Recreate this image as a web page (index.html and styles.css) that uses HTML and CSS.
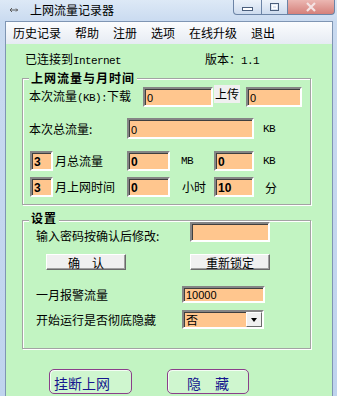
FILE: index.html
```html
<!DOCTYPE html>
<html lang="zh-CN">
<head>
    <meta charset="UTF-8">
    <title>上网流量记录器</title>
    <link rel="stylesheet" href="styles.css">
</head>
<body>
    <div class="titlebar">
        <svg class="app-icon" width="10" height="6" viewBox="0 0 10 6">
            <path d="M3 1 L1 3 L3 5 M1 3 H9 M7 1.5 L8.5 3 L7 4.5" fill="none" stroke="#5a5a5a" stroke-width="1"/>
        </svg>
        <span class="title">上网流量记录器</span>
        <div class="caption">
            <span class="cap cap-min">
                <svg width="11" height="5" viewBox="0 0 11 5"><rect x="0.5" y="0.5" width="10" height="3" fill="#fff" stroke="#4b5f7c"/></svg>
            </span>
            <span class="cap cap-max">
                <svg width="9" height="8" viewBox="0 0 9 8"><rect x="0.5" y="0.5" width="8" height="7" fill="none" stroke="#4b5f7c"/><rect x="2.5" y="2.5" width="4" height="3" fill="none" stroke="#fff"/></svg>
            </span>
            <span class="cap cap-close">
                <svg width="12" height="10" viewBox="0 0 12 10"><path d="M2 1 L10 9 M10 1 L2 9" stroke="#f4e4e4" stroke-width="2.2"/></svg>
            </span>
        </div>
    </div>

    <div class="client">
        <ul class="menubar">
            <li>历史记录</li>
            <li>帮助</li>
            <li>注册</li>
            <li>选项</li>
            <li>在线升级</li>
            <li>退出</li>
        </ul>

        <div class="form">
            <div class="status">
                <span class="status-conn">已连接到<span class="lat">Internet</span></span>
                <span>版本：<span class="lat">1.1</span></span>
            </div>

            <!-- 流量与时间 -->
            <div class="group group-traffic">
                <span class="group-title">上网流量与月时间</span>
                <div class="row">
                    <span class="lbl lbl-down">本次流量<span class="lat">(KB):</span>下载</span>
                    <input class="field w70" value="0" readonly>
                    <span class="lbl-up">上传</span>
                    <input class="field w56" value="0" readonly>
                </div>
                <div class="row row-total">
                    <span class="lbl lbl-total">本次总流量:</span>
                    <input class="field w127 h21" value="0" readonly>
                    <span class="unit lat">KB</span>
                </div>
                <div class="row row-month">
                    <input class="field bold w23" value="3" readonly>
                    <span class="lbl lbl-month">月总流量</span>
                    <input class="field bold w43" value="0" readonly>
                    <span class="lbl lbl-mb lat">MB</span>
                    <input class="field bold w40" value="0" readonly>
                    <span class="unit lat">KB</span>
                </div>
                <div class="row row-time">
                    <input class="field bold w23" value="3" readonly>
                    <span class="lbl lbl-month">月上网时间</span>
                    <input class="field bold w43" value="0" readonly>
                    <span class="lbl lbl-hour">小时</span>
                    <input class="field bold w40" value="10" readonly>
                    <span class="unit unit-min">分</span>
                </div>
            </div>

            <!-- 设置 -->
            <div class="group group-settings">
                <span class="group-title">设置</span>
                <div class="row">
                    <span class="lbl lbl-pwd">输入密码按确认后修改:</span>
                    <input class="field w80" value="" readonly>
                </div>
                <div class="row row-btns">
                    <button class="btn btn-ok">确　认</button>
                    <button class="btn btn-relock">重新锁定</button>
                </div>
                <div class="row row-alarm">
                    <span class="lbl lbl-set">一月报警流量</span>
                    <input class="field w83 h17" value="10000" readonly>
                </div>
                <div class="row row-hide">
                    <span class="lbl lbl-set">开始运行是否彻底隐藏</span>
                    <div class="combo">
                        <span class="combo-value">否</span>
                        <span class="combo-arrow"></span>
                    </div>
                </div>
            </div>

            <div class="actions">
                <button class="action action-hangup">挂断上网</button>
                <button class="action action-hide">隐　藏</button>
            </div>
        </div>
    </div>
</body>
</html>
```

FILE: styles.css
```css
body {
    margin: 0;
    width: 337px;
    height: 396px;
    overflow: hidden;
    background: linear-gradient(#dde9f6, #c9daf0 22px, #bfd4ee);
    font-family: "Noto Sans CJK SC", sans-serif;
    font-size: 12px;
    color: #000;
}

/* 标题栏 */
.titlebar {
    height: 21px;
    display: flex;
    align-items: flex-start;
}

.app-icon {
    margin: 7px 0 0 9px;
}

.title {
    margin: 2px 0 0 11px;
    line-height: 16px;
}

.caption {
    display: flex;
    margin-left: auto;
    margin-right: 2px;
}

.cap {
    height: 15px;
    box-sizing: border-box;
    border: 1px solid #6c84a6;
    border-top: 0;
    display: flex;
    align-items: center;
    justify-content: center;
    background: linear-gradient(#edf3fa, #cddbee);
}

.cap-min {
    width: 29px;
    border-bottom-left-radius: 4px;
    padding-top: 4px;
}

.cap-max {
    width: 26px;
    border-left: 0;
}

.cap-close {
    width: 47px;
    border-left: 0;
    border-bottom-right-radius: 4px;
    background: linear-gradient(#ebb7b2, #d5807a);
}

/* 窗体 */
.client {
    margin: 0 4px 0 5px;
    height: 375px;
    border: 1px solid #7f95b3;
    border-bottom: 0;
    display: flex;
    flex-direction: column;
}

.menubar {
    height: 22px;
    margin: 0;
    padding: 0;
    list-style: none;
    display: flex;
    background: linear-gradient(#fbfcfe, #e6ebf3);
}

.menubar li {
    padding: 0 7px;
    line-height: 22px;
}

.form {
    flex: 1;
    background: #c2f4c2;
}

.lat {
    font-family: "Liberation Mono", monospace;
    font-size: 11px;
    letter-spacing: -0.6px;
}

.status {
    display: flex;
    margin-top: 7px;
    padding-left: 19px;
    line-height: 16px;
}

.status-conn {
    width: 180px;
}

/* 分组框 */
.group {
    position: relative;
    margin-left: 16px;
    width: 289px;
    box-sizing: border-box;
    border: 1px solid #a3a3a3;
    box-shadow: inset 1px 1px 0 #fff, 1px 1px 0 #fff;
}

.group-title {
    position: absolute;
    top: -8px;
    left: 6px;
    padding: 0 2px;
    background: #c2f4c2;
    font-weight: bold;
    letter-spacing: 1px;
    line-height: 14px;
}

.group-settings .group-title {
    top: -10px;
}

.group-traffic {
    margin-top: 9px;
    padding: 8px 0 7px;
}

.group-settings {
    margin-top: 15px;
    padding: 1px 0 19px;
}

.row {
    display: flex;
    align-items: center;
}

.lbl {
    flex: none;
    white-space: nowrap;
    line-height: 14px;
}

.lbl-down {
    width: 114px;
    margin-left: 6px;
}

.lbl-up {
    align-self: flex-start;
    width: 26px;
    height: 18px;
    margin: -2px 0 0 1px;
    background: #f0f0f0;
    line-height: 18px;
    padding-left: 1px;
    box-sizing: border-box;
}

.row-total {
    margin-top: 11px;
}

.lbl-total {
    width: 98px;
    margin-left: 6px;
}

.unit {
    margin-left: 9px;
}

.unit-min {
    margin-left: 11px;
}

.row-month {
    margin-top: 12px;
}

.row-time {
    margin-top: 6px;
}

.row-month .field:first-child,
.row-time .field:first-child {
    margin-left: 7px;
}

.lbl-month {
    width: 72px;
    margin-left: 2px;
}

.lbl-mb {
    width: 33px;
    margin-left: 11px;
}

.lbl-hour {
    width: 32px;
    margin-left: 12px;
}

.lbl-pwd {
    width: 154px;
    margin: 8px 0 0 13px;
    line-height: 12px;
}

.lbl-set {
    width: 146px;
    margin-left: 13px;
}

.row-btns {
    margin-top: 12px;
}

.row-alarm {
    margin-top: 16px;
}

.row-hide {
    margin-top: 7px;
}

/* 文本框 */
.field {
    flex: none;
    box-sizing: border-box;
    height: 20px;
    margin: 0;
    padding: 2px 0 0 2px;
    border: 2px solid;
    border-color: #858585 #fff #fff #858585;
    box-shadow: inset 1px 1px 0 #3f3f3f;
    background: #ffc68e;
    font-family: "Liberation Sans", sans-serif;
    font-size: 11px;
    color: #000;
    outline: none;
}

.field.bold {
    font-weight: bold;
    font-size: 12px;
}

.w23 { width: 23px; }
.w40 { width: 40px; }
.w43 { width: 43px; }
.w56 { width: 56px; margin-left: 6px; }
.w70 { width: 70px; }
.w80 { width: 80px; }
.w83 { width: 83px; }
.w127 { width: 127px; }
.h21 { height: 21px; }
.h17 { height: 17px; padding-top: 1px; }

/* 按钮 */
.btn {
    width: 80px;
    height: 16px;
    padding: 0;
    box-sizing: border-box;
    border: 1px solid;
    border-color: #fff #6a6a6a #6a6a6a #fff;
    box-shadow: inset -1px -1px 0 #a0a0a0;
    background: #f0f0f0;
    font-family: "Noto Sans CJK SC", sans-serif;
    font-size: 12px;
    line-height: 13px;
    color: #000;
}

.btn-ok {
    margin-left: 23px;
}

.btn-relock {
    margin-left: 64px;
}

/* 下拉框 */
.combo {
    display: flex;
    align-items: center;
    width: 82px;
    height: 19px;
    box-sizing: border-box;
    border: 2px solid;
    border-color: #858585 #fff #fff #858585;
    box-shadow: inset 1px 1px 0 #3f3f3f;
    background: #ffc68e;
}

.combo-value {
    padding-left: 2px;
    line-height: 15px;
}

.combo-arrow {
    margin-left: auto;
    width: 16px;
    height: 15px;
    box-sizing: border-box;
    border: 1px solid;
    border-color: #fff #6a6a6a #6a6a6a #fff;
    background: #f0f0f0;
    position: relative;
}

.combo-arrow::after {
    content: "";
    position: absolute;
    left: 4px;
    top: 5px;
    border-left: 3px solid transparent;
    border-right: 3px solid transparent;
    border-top: 4px solid #000;
}

/* 底部按钮 */
.actions {
    display: flex;
    margin-top: 20px;
}

.action {
    height: 25px;
    box-sizing: border-box;
    border: 1px solid #8a3f8a;
    border-radius: 5px;
    background: #cff6cf;
    box-shadow: inset 1px 1px 0 #f4fdf4;
    font-family: "Noto Sans CJK SC", sans-serif;
    font-size: 14px;
    line-height: 20px;
    padding: 2px 0 0;
    color: #16168e;
}

.action-hangup {
    width: 83px;
    margin-left: 43px;
    text-align: left;
    padding-left: 4px;
}

.action-hide {
    width: 82px;
    margin-left: 35px;
}
```
